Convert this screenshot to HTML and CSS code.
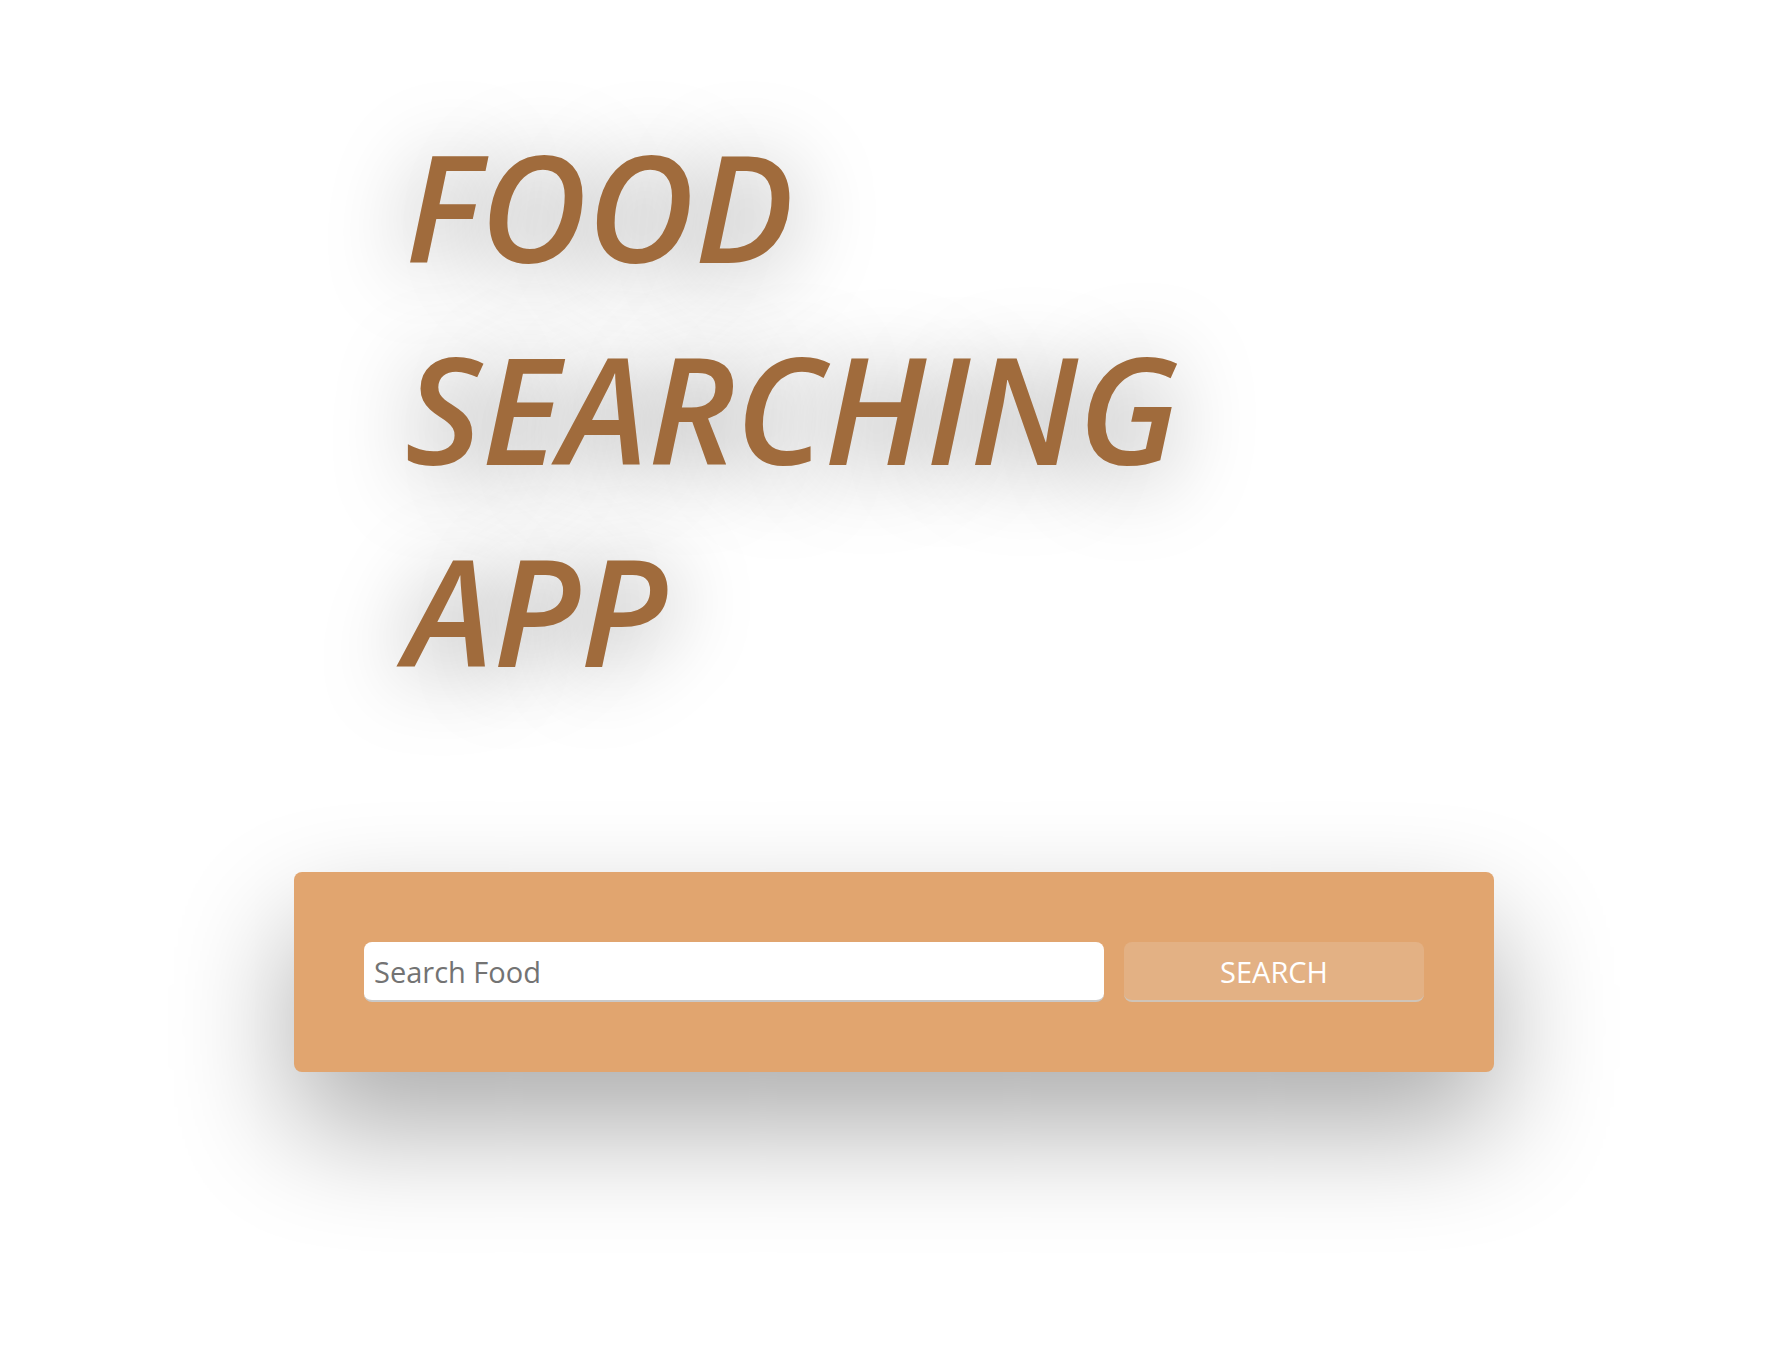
FILE: index.html
```html
<!DOCTYPE html>
<html lang="en">
<head>
<meta charset="utf-8">
<title>Food Searching App</title>
<link rel="stylesheet" href="styles.css">
</head>
<body>
<main class="page">
  <h1 class="title">FOOD SEARCHING APP</h1>
  <form class="search-card">
    <input class="search-input" type="text" placeholder="Search Food">
    <button class="search-btn" type="button">SEARCH</button>
  </form>
</main>
</body>
</html>
```
FILE: styles.css
```css
html, body {
  margin: 0;
  padding: 0;
  background: #ffffff;
}

.page {
  display: flex;
  flex-direction: column;
  min-height: 100vh;
  box-sizing: border-box;
  padding-top: 105px;
  padding-bottom: 290px;
}

.title {
  margin: 0 0 0 405px;
  width: 900px;
  font-family: "Open Sans", "Noto Sans", sans-serif;
  font-style: italic;
  font-weight: 600;
  font-size: 148px;
  line-height: 202px;
  letter-spacing: 0px;
  color: #a06b3c;
  text-shadow: 0 10px 85px rgba(0, 0, 0, 0.4);
}

.search-card {
  margin: 161px 0 0 294px;
  width: 1200px;
  box-sizing: border-box;
  height: 200px;
  padding: 70px;
  display: flex;
  gap: 20px;
  background: #e1a56f;
  border-radius: 8px;
  box-shadow: 0 55px 120px rgba(0, 0, 0, 0.33);
}

.search-input {
  flex: 1;
  box-sizing: border-box;
  height: 60px;
  margin: 0;
  padding: 0 10px;
  border: none;
  border-bottom: 2px solid #c9c9c9;
  border-radius: 8px;
  background: #ffffff;
  font-family: "Open Sans", "Noto Sans", sans-serif;
  font-size: 29px;
  color: #555;
  outline: none;
}

.search-input::placeholder {
  color: #737373;
}

.search-btn {
  width: 300px;
  box-sizing: border-box;
  height: 60px;
  margin: 0;
  padding: 0;
  border: none;
  border-bottom: 2px solid #cfc4b8;
  border-radius: 8px;
  background: #e3b184;
  color: #ffffff;
  font-family: "Open Sans", "Noto Sans", sans-serif;
  font-size: 29px;
  font-weight: 500;
  cursor: pointer;
}
```
